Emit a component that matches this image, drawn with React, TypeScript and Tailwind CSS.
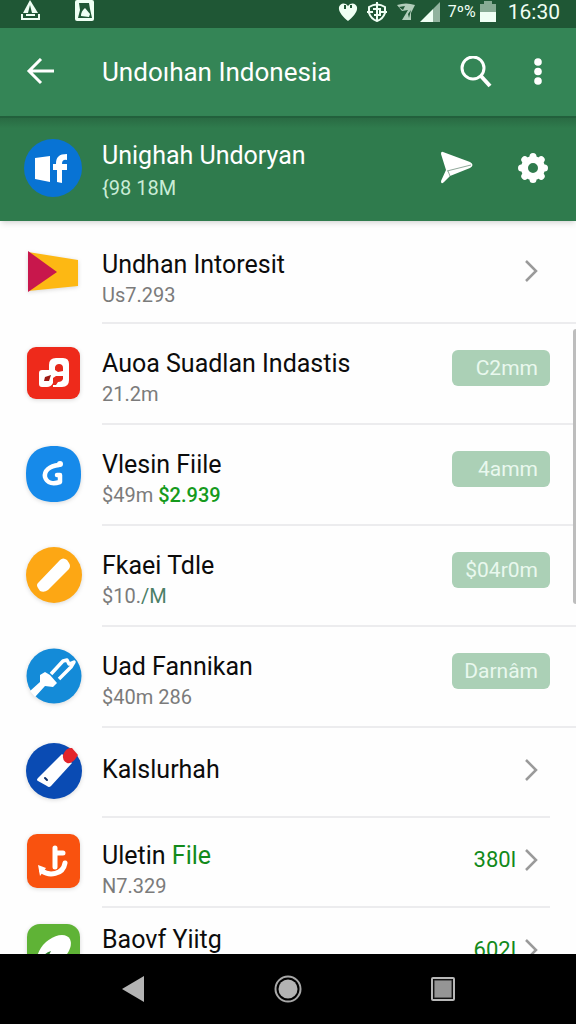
import type { ReactNode } from "react";
import { clsx } from "clsx";

interface Item {
  id: number;
  title: ReactNode;
  subtitle?: ReactNode;
  icon: ReactNode;
  price?: string;
  value?: string;
  rowClass: string;
  textClass: string;
}

function FlagIcon() {
  return (
    <svg viewBox="0 0 56 56" className="h-14 w-14 drop-shadow-sm" aria-hidden="true">
      <path d="M2 8 52 16V42L2 47Z" fill="#fdb813" />
      <path d="M2 7 31 28 2 48Z" fill="#c8174c" />
    </svg>
  );
}

function MusicIcon() {
  return (
    <svg viewBox="0 0 56 56" className="h-14 w-14 drop-shadow-sm" aria-hidden="true">
      <rect x="1" y="2" width="53" height="52" rx="9" fill="#ee2a1b" />
      <path
        d="M13 28Q13 25 16 25H23V20Q23 13 30 13H37Q43 13 43 19V35Q43 42 36 42H27V38Q25 42 21 42H16Q13 42 13 39Z"
        fill="#fff"
      />
      <path d="M29 25V22Q30 19 33 19Q37 19 37 23V26L32 27Z" fill="#e5281b" />
      <path d="M19 32 25 30 23 36H18Z" fill="#9c1a14" />
      <path d="M30 31H37V34Q36 37 32 37L30 40H27V33Z" fill="#e5281b" />
    </svg>
  );
}

function SyncIcon() {
  return (
    <svg viewBox="0 0 56 56" className="h-14 w-14 drop-shadow-sm" aria-hidden="true">
      <path
        d="M28 0C46 0 55 9 55 28S46 56 28 56 0 47 0 28 10 0 28 0Z"
        fill="#168aea"
      />
      <path
        d="M33 19C23 20 18 25 19 31C21 38 28 38 34 36V29L31 29"
        fill="none"
        stroke="#fff"
        strokeWidth="4.5"
        strokeLinecap="round"
        strokeLinejoin="round"
      />
      <circle cx="34" cy="18" r="3" fill="#fff" />
    </svg>
  );
}

function StickIcon() {
  return (
    <svg viewBox="0 0 56 56" className="h-14 w-14 drop-shadow-sm" aria-hidden="true">
      <circle cx="28" cy="28" r="28" fill="#fda714" />
      <path
        d="M12 36 34 13Q37 10 41 13L43 16Q45 19 43 22L22 43Q18 46 14 44L12 41Q10 38 12 36Z"
        fill="#fff"
      />
    </svg>
  );
}

function ToolIcon() {
  return (
    <svg viewBox="0 0 56 56" className="h-14 w-14 drop-shadow-sm" aria-hidden="true">
      <circle cx="28" cy="28" r="27.5" fill="#148bd8" />
      <path
        d="M4 43 14 34V27L19 24 24 27 31 35 27 39 19 38 9 49Z"
        fill="#fff"
      />
      <path
        d="M25 26 37 13 41 12 43 16 48 14 45 19 33 31"
        fill="none"
        stroke="#fff"
        strokeWidth="3.5"
        strokeLinejoin="round"
      />
    </svg>
  );
}

function MarkerIcon() {
  return (
    <svg viewBox="0 0 56 56" className="h-14 w-14 drop-shadow-sm" aria-hidden="true">
      <circle cx="28" cy="28" r="28" fill="#0a4bb3" />
      <path d="M12 35 36 11 46 20 25 43Q23 45 21 43L12 38Q10 37 12 35Z" fill="#fff" />
      <path d="M37 12Q40 4 46 5L52 12Q46 22 41 20Q36 17 37 12Z" fill="#e3242b" />
      <path d="M19 35 21 37" stroke="#0b2d66" strokeWidth="2" strokeLinecap="round" />
    </svg>
  );
}

function AnchorIcon() {
  return (
    <svg viewBox="0 0 56 56" className="h-14 w-14 drop-shadow-sm" aria-hidden="true">
      <rect x="1" y="1" width="53" height="54" rx="10" fill="#f9520f" />
      <path
        d="M29 15V34M30 20H37"
        fill="none"
        stroke="#fff"
        strokeWidth="5"
        strokeLinecap="round"
      />
      <path
        d="M16 38C23 43 37 42 39 30"
        fill="none"
        stroke="#fff"
        strokeWidth="5"
        strokeLinecap="round"
      />
      <path d="M12 32 20 35 14 43Z" fill="#fff" />
    </svg>
  );
}

function LeafIcon() {
  return (
    <svg viewBox="0 0 56 56" className="h-14 w-14 drop-shadow-sm" aria-hidden="true">
      <rect x="1" y="1" width="53" height="54" rx="13" fill="#5fb336" />
      <ellipse cx="28" cy="28" rx="20" ry="12" transform="rotate(-42 28 28)" fill="#fff" />
      <path d="M13 38Q18 30 25 28L20 38Z" fill="#2f7d2b" />
    </svg>
  );
}

const items: Item[] = [
  {
    id: 1,
    title: "Undhan Intoresit",
    subtitle: "Us7.293",
    icon: <FlagIcon />,
    rowClass: "min-h-[101px]",
    textClass: "pt-3",
  },
  {
    id: 2,
    title: "Auoa Suadlan Indastis",
    subtitle: "21.2m",
    icon: <MusicIcon />,
    price: "C2mm",
    rowClass: "min-h-[101px]",
    textClass: "pt-2",
  },
  {
    id: 3,
    title: "Vlesin Fiile",
    subtitle: (
      <>
        $49m <span className="font-medium text-[#159a1c]">$2.939</span>
      </>
    ),
    icon: <SyncIcon />,
    price: "4amm",
    rowClass: "min-h-[101px]",
    textClass: "pt-2",
  },
  {
    id: 4,
    title: "Fkaei Tdle",
    subtitle: (
      <>
        $10.<span className="text-[#4b7f66]">/M</span>
      </>
    ),
    icon: <StickIcon />,
    price: "$04r0m",
    rowClass: "min-h-[101px]",
    textClass: "pt-2",
  },
  {
    id: 5,
    title: "Uad Fannikan",
    subtitle: "$40m 286",
    icon: <ToolIcon />,
    price: "Darnâm",
    rowClass: "min-h-[101px]",
    textClass: "pt-2",
  },
  {
    id: 6,
    title: "Kalslurhah",
    icon: <MarkerIcon />,
    rowClass: "min-h-[90px]",
    textClass: "pb-1",
  },
  {
    id: 7,
    title: (
      <>
        Uletin <span className="text-[#128a1a]">File</span>
      </>
    ),
    subtitle: "N7.329",
    icon: <AnchorIcon />,
    value: "380l",
    rowClass: "min-h-[90px]",
    textClass: "pt-4",
  },
  {
    id: 8,
    title: "Baovf Yiitg",
    icon: <LeafIcon />,
    value: "602l",
    rowClass: "min-h-[90px]",
    textClass: "pb-6",
  },
];

function StatusBar() {
  return (
    <div className="flex h-7 shrink-0 items-start justify-between bg-[#1f5735] pr-4 pl-5 text-[#effff4]">
      <div className="flex gap-8">
        <svg viewBox="0 0 22 22" className="h-[22px] w-[22px]" aria-hidden="true">
          <path d="M10 0 18 13H3Z" fill="currentColor" />
          <path d="M10 5 12 13H8Z" fill="#1f5735" />
          <path d="M2 14V19H19V14" fill="none" stroke="currentColor" strokeWidth="2" />
          <path d="M6 15H15" stroke="currentColor" strokeWidth="2" />
        </svg>
        <svg viewBox="0 0 22 22" className="h-[22px] w-[22px]" aria-hidden="true">
          <rect x="1" y="0" width="19" height="21" rx="2" fill="currentColor" />
          <path d="M5 3H15L16 9 18 18H4L6 10Z" fill="#1f5735" />
          <path d="M7 16Q7 11 11 8L16 14 15 17Z" fill="currentColor" />
        </svg>
      </div>
      <div className="flex h-6 items-center">
        <svg viewBox="0 0 20 20" className="mr-2 h-5 w-5" aria-hidden="true">
          <path d="M10 19C6 16 0 10 1 5Q3 0 8 2L10 4 12 2Q17 0 19 5C20 10 14 16 10 19Z" fill="currentColor" />
          <path d="M7 3V7M13 3V6" stroke="#1f5735" strokeWidth="2" />
        </svg>
        <svg viewBox="0 0 22 22" className="mr-2 h-[22px] w-[22px]" aria-hidden="true">
          <g fill="none" stroke="currentColor" strokeWidth="2">
            <path d="M3 6Q11 1 19 6V12Q17 18 11 20Q5 18 3 12Z" />
            <path d="M11 1V19M7 8H14V14H8M1 11H7M15 11H21" />
          </g>
        </svg>
        <svg viewBox="0 0 20 20" className="mr-1 h-5 w-5" aria-hidden="true">
          <path d="M1 3Q10 0 19 3L15 11V18H6L12 8 6 9Z" fill="currentColor" opacity="0.7" />
          <path d="M3 5 9 4 7 8ZM12 12 15 8 13 16Z" fill="#1f5735" />
        </svg>
        <svg viewBox="0 0 20 20" className="mr-2 h-5 w-5" aria-hidden="true">
          <path d="M0 20 13 7V20Z" fill="currentColor" />
          <path d="M13 7 20 0V20H13Z" fill="currentColor" opacity="0.55" />
        </svg>
        <span className="text-base leading-6">7º%</span>
        <svg viewBox="0 0 16 22" className="mr-3 ml-1 h-[22px] w-4" aria-hidden="true">
          <path d="M4 0H12V3H16V11H0V3H4Z" fill="currentColor" opacity="0.5" />
          <path d="M0 11H16V21H0Z" fill="currentColor" />
        </svg>
        <span className="text-[21px] leading-6">16:30</span>
      </div>
    </div>
  );
}

function AppBar() {
  return (
    <header className="flex h-[88px] shrink-0 items-center bg-[#348556] pr-4 pl-[26px] text-white">
      <button type="button" aria-label="Back" className="mr-12 h-7 w-7">
        <svg viewBox="0 0 28 28" className="h-7 w-7" aria-hidden="true">
          <path d="M28 13H4M15 1 3 13 15 25" fill="none" stroke="currentColor" strokeWidth="3" />
        </svg>
      </button>
      <h1 className="flex-1 truncate text-[26px] leading-8">Undoıhan Indonesia</h1>
      <button type="button" aria-label="Search" className="mr-6 h-8 w-8">
        <svg viewBox="0 0 32 32" className="h-8 w-8" aria-hidden="true">
          <circle cx="13" cy="12" r="11" fill="none" stroke="currentColor" strokeWidth="3" />
          <path d="M20 19 30 30" stroke="currentColor" strokeWidth="4" />
        </svg>
      </button>
      <button type="button" aria-label="More options" className="h-8 w-11">
        <svg viewBox="0 0 44 32" className="h-8 w-11" aria-hidden="true">
          <g fill="currentColor">
            <circle cx="22" cy="6" r="3.8" />
            <circle cx="22" cy="15.5" r="3.8" />
            <circle cx="22" cy="25" r="3.8" />
          </g>
        </svg>
      </button>
    </header>
  );
}

function AccountBar() {
  return (
    <section className="z-10 flex h-[105px] shrink-0 items-center border-t-2 border-[#22603c] bg-[#2f7b4d] bg-linear-to-b from-[#296b43] to-[#2f7b4d] to-10% pr-7 pb-1 pl-6 text-white shadow-md">
      <svg viewBox="0 0 58 58" className="mr-5 h-[58px] w-[58px]" aria-hidden="true">
        <circle cx="29" cy="29" r="29" fill="#0873d4" />
        <path d="M11 19 26 17V43L11 40Z" fill="#fff" />
        <path d="M43 15V21Q38 20 38 25H43V31H38V44L33 43V31H29V25H32C32 18 35 15 43 15Z" fill="#fff" />
      </svg>
      <div className="min-w-0 flex-1 pt-1">
        <h2 className="truncate text-[25px] leading-9">Unighah Undoryan</h2>
        <p className="text-xl leading-7 text-[#c9ecd6]">{"{98 18M"}</p>
      </div>
      <button type="button" aria-label="Send" className="mr-11 h-[34px] w-[34px]">
        <svg viewBox="0 0 34 34" className="h-[34px] w-[34px]" aria-hidden="true">
          <path
            d="M3 1Q1 0 1 3L6 19 1 30Q1 34 4 31L10 25 30 17Q35 14 30 11Z"
            fill="currentColor"
          />
          <path d="M7 20 31 14M8 20 10 25" fill="none" stroke="#8fa899" strokeWidth="1" />
        </svg>
      </button>
      <button type="button" aria-label="Settings" className="h-[30px] w-[30px]">
        <svg viewBox="0 0 30 30" className="h-[30px] w-[30px]" aria-hidden="true">
          <circle cx="15" cy="15" r="8.5" fill="none" stroke="currentColor" strokeWidth="7" />
          <g stroke="currentColor" strokeWidth="7" strokeLinecap="round">
            <path d="M15 4V3.5M15 26V26.5M4 15H3.5M26 15H26.5M7 7 6.8 6.8M23 7 23.2 6.8M7 23 6.8 23.2M23 23 23.2 23.2" />
          </g>
        </svg>
      </button>
    </section>
  );
}

function Chevron() {
  return (
    <svg viewBox="0 0 14 22" className="mr-3 h-[22px] w-3.5" aria-hidden="true">
      <path d="M2 1 12 11 2 21" fill="none" stroke="#9a9a9a" strokeWidth="2.5" />
    </svg>
  );
}

function Row({ item }: { item: Item }) {
  return (
    <li className={clsx("flex items-stretch pl-[26px]", item.rowClass)}>
      <div className="mr-5 flex w-14 shrink-0 items-center pb-1">{item.icon}</div>
      <div
        className={clsx(
          "flex min-w-0 flex-1 items-center border-b-2 border-[#ececee]",
          item.price || item.id === 1 ? "pr-[26px]" : "mr-[26px]",
        )}
      >
        <div className={clsx("min-w-0 flex-1", item.textClass)}>
          <h3 className="truncate text-[25px] leading-8 text-[#0c0c0c]">{item.title}</h3>
          {item.subtitle && (
            <p className="text-xl leading-7 text-[#7b7b7b]">{item.subtitle}</p>
          )}
        </div>
        {item.price ? (
          <button
            type="button"
            className="mb-3 h-9 w-[98px] rounded-md bg-[#abd0b6] pr-3 text-right text-[21px] leading-9 text-[#e9f8ee]"
          >
            {item.price}
          </button>
        ) : (
          <div className="mb-1 flex items-center gap-2">
            {item.value && (
              <span className="text-[22px] leading-8 text-[#128a1a]">{item.value}</span>
            )}
            <Chevron />
          </div>
        )}
      </div>
    </li>
  );
}

function NavBar() {
  return (
    <nav className="grid h-[70px] shrink-0 grid-cols-3 items-center justify-items-center bg-black px-14">
      <button type="button" aria-label="Back">
        <svg viewBox="0 0 28 28" className="h-7 w-7" aria-hidden="true">
          <path d="M3 14 25 1V27Z" fill="#b3b3b3" />
        </svg>
      </button>
      <button type="button" aria-label="Home">
        <svg viewBox="0 0 28 28" className="h-7 w-7" aria-hidden="true">
          <circle cx="14" cy="14" r="12.5" fill="none" stroke="#a8a8a8" strokeWidth="2" />
          <circle cx="14" cy="14" r="9.5" fill="#b3b3b3" />
        </svg>
      </button>
      <button type="button" aria-label="Recent apps">
        <svg viewBox="0 0 28 28" className="h-7 w-7" aria-hidden="true">
          <rect x="3" y="3" width="22" height="22" rx="1" fill="none" stroke="#b8b8b8" strokeWidth="2" />
          <rect x="5" y="5" width="18" height="18" fill="#959595" stroke="#222" />
        </svg>
      </button>
    </nav>
  );
}

export default function App() {
  return (
    <div className="flex h-screen flex-col overflow-hidden bg-[#fefefe] font-[Roboto,'Liberation_Sans',sans-serif]">
      <StatusBar />
      <AppBar />
      <AccountBar />
      <main className="relative min-h-0 flex-1 overflow-hidden pt-0.5">
        <ul>
          {items.map((item) => (
            <Row key={item.id} item={item} />
          ))}
        </ul>
        {/* Scroll indicator */}
        <div className="absolute top-[108px] right-0 h-[275px] w-[3px] rounded-l-sm bg-[#bdbdbd]" />
      </main>
      <NavBar />
    </div>
  );
}
